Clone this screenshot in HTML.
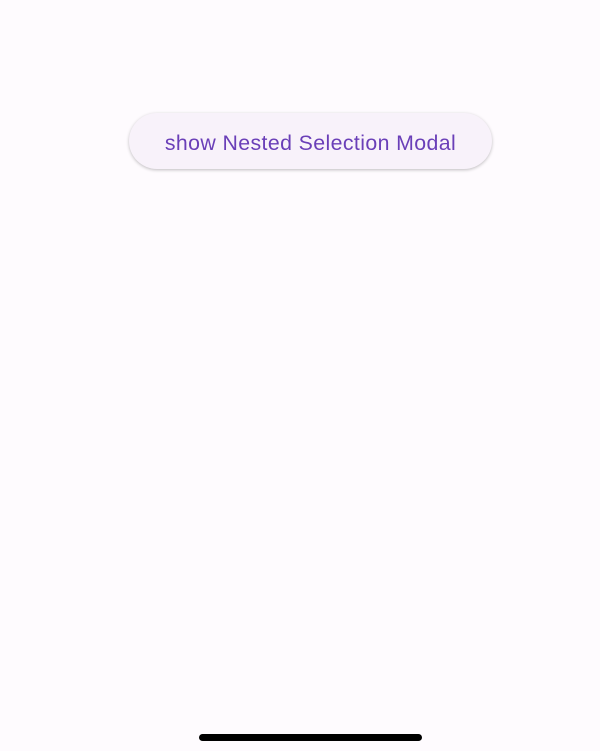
<!DOCTYPE html>
<html><head><style>
html,body{margin:0;padding:0;width:600px;height:751px;background:#fefbfe;overflow:hidden;font-family:"Liberation Sans",sans-serif;}
.btn{position:absolute;left:129px;top:113px;width:363px;height:56px;border-radius:28px;background:#f8f2fa;box-shadow:0 1px 3px rgba(0,0,0,0.25);display:flex;align-items:center;justify-content:center;color:#6a3fb8;font-size:21.3px;letter-spacing:0.4px;}
.btn span{position:relative;top:2px;}
.bar{position:absolute;left:199px;top:734px;width:223px;height:7px;border-radius:4px;background:#000;}
</style></head><body>
<div class="btn"><span>show Nested Selection Modal</span></div>
<div class="bar"></div>
</body></html>
